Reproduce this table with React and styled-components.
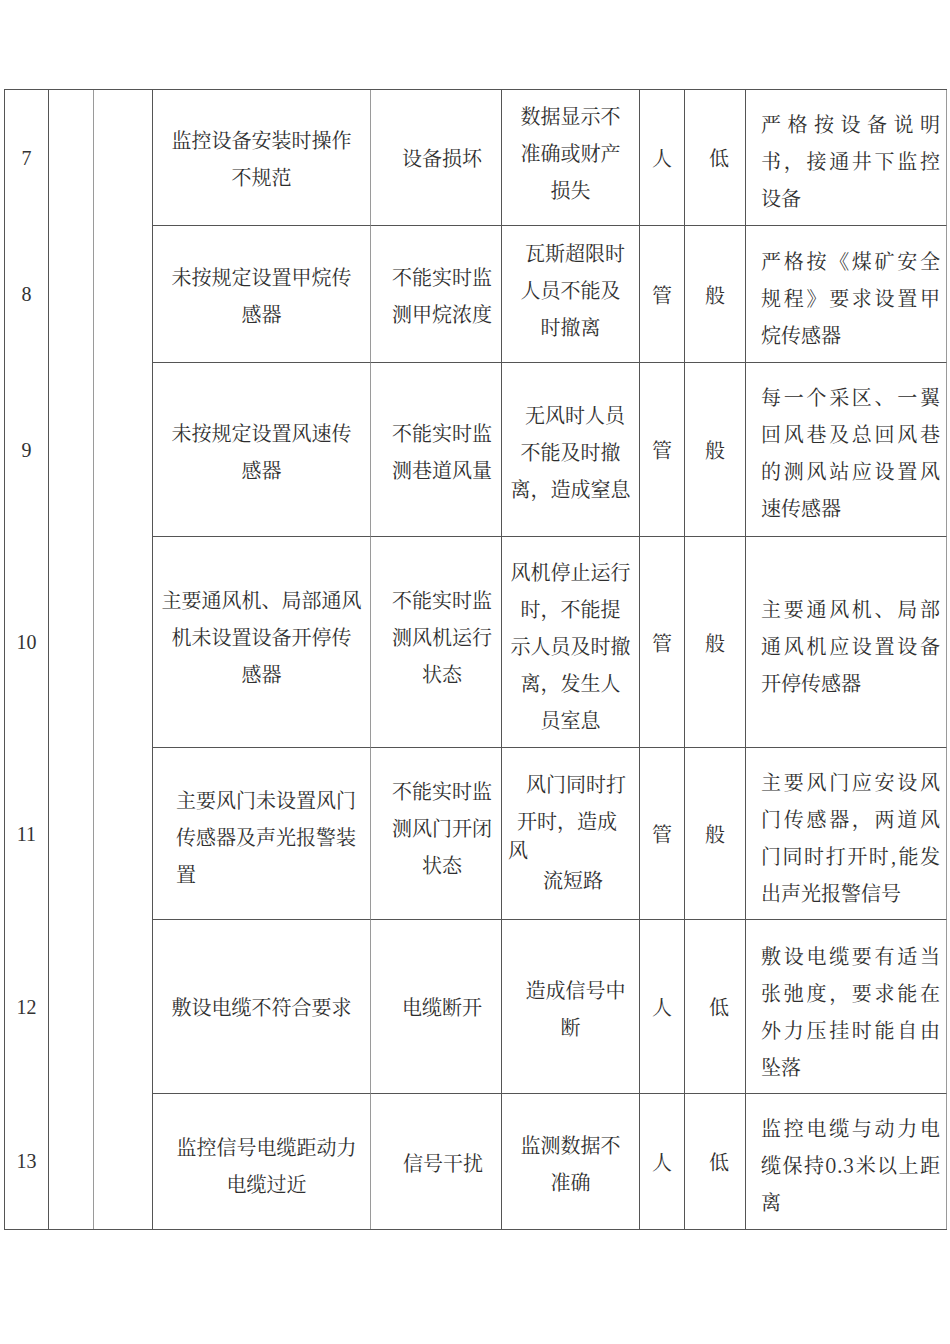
import React from 'react'
import styled, { createGlobalStyle } from 'styled-components'

const GlobalStyle = createGlobalStyle`
  html, body {
    margin: 0;
    padding: 0;
    background: #fff;
  }
  body {
    font-family: "Noto Serif CJK SC", "Noto Sans CJK SC", serif;
    color: #2e2e2e;
  }
`

const Page = styled.div`
  width: 950px;
  min-height: 1344px;
  padding: 89px 0 0 4px;
  box-sizing: border-box;
`

const Sheet = styled.div`
  display: grid;
  grid-template-columns: 44px 45px 59px 218px 131px 138px 45px 61px 201px;
  grid-template-rows: 136px 137px 174px 211px 172px 174px 135px;
  width: 943px;
  box-sizing: border-box;
  border: 1px solid #555;
  border-right: none;
`

const NumCell = styled.div`
  grid-column: 1;
  grid-row: ${p => p.$row};
  border-right: 1px solid #555;
  display: flex;
  align-items: center;
  justify-content: center;
  font-family: "Liberation Serif", "Times New Roman", serif;
  font-size: 20px;
  color: #333;
`

const BlankCol = styled.div`
  grid-column: ${p => p.$col};
  grid-row: 1 / -1;
  border-right: 1px solid ${p => (p.$light ? '#9a9a9a' : '#555')};
`

const Cell = styled.div`
  grid-column: ${p => p.$col};
  grid-row: ${p => p.$row};
  border-right: 1px solid ${p => (p.$light ? '#9a9a9a' : '#555')};
  border-bottom: ${p => (p.$last ? 'none' : '1px solid #555')};
  display: flex;
  flex-direction: column;
  justify-content: center;
  box-sizing: border-box;
  padding: ${p => p.$pad};
  text-align: ${p => p.$align || 'center'};
  font-size: 20px;
  line-height: 37px;
  overflow: hidden;
`

const Line = styled.div`
  white-space: ${p => (p.$spread ? 'normal' : 'nowrap')};
  padding-left: ${p => p.$indent || 0}px;
  line-height: ${p => (p.$lh ? `${p.$lh}px` : 'inherit')};
  text-align-last: ${p => (p.$spread ? 'justify' : 'auto')};
`

const rows = [
  {
    no: '7',
    item: { lines: ['监控设备安装时操作', '不规范'] },
    cause: { lines: ['设备损坏'] },
    result: { lines: ['数据显示不', '准确或财产', '损失'], dy: -5 },
    kind: '人',
    level: '低',
    measure: { lines: ['严格按设备说明', '书，接通井下监控', '设备'], dy: 3 },
  },
  {
    no: '8',
    item: { lines: ['未按规定设置甲烷传', '感器'], dy: 1 },
    cause: { lines: ['不能实时监', '测甲烷浓度'], dy: 1 },
    result: { lines: [{ t: '瓦斯超限时', i: 9 }, '人员不能及', '时撤离'], dy: -5 },
    kind: '管',
    level: '般',
    measure: { lines: ['严格按《煤矿安全', '规程》要求设置甲', '烷传感器'], dy: 3 },
  },
  {
    no: '9',
    item: { lines: ['未按规定设置风速传', '感器'], dy: 1 },
    cause: { lines: ['不能实时监', '测巷道风量'], dy: 1 },
    result: { lines: [{ t: '无风时人员', i: 9 }, '不能及时撤', '离，造成窒息'], dy: 2 },
    kind: '管',
    level: '般',
    measure: { lines: ['每一个采区、一翼', '回风巷及总回风巷', '的测风站应设置风', '速传感器'], dy: 2 },
  },
  {
    no: '10',
    item: { lines: ['主要通风机、局部通风', '机未设置设备开停传', '感器'], dy: -6 },
    cause: { lines: ['不能实时监', '测风机运行', '状态'], dy: -6 },
    result: { lines: ['风机停止运行', '时，不能提', '示人员及时撤', '离，发生人', '员室息'], dy: 3 },
    kind: '管',
    level: '般',
    measure: { lines: ['主要通风机、局部', '通风机应设置设备', '开停传感器'], dy: 3 },
  },
  {
    no: '11',
    item: { lines: ['主要风门未设置风门', '传感器及声光报警装', '置'], dy: 3, align: 'left', padLeft: 23 },
    cause: { lines: ['不能实时监', '测风门开闭', '状态'], dy: -6 },
    result: {
      lines: [{ t: '风门同时打', i: 18 }, { t: '开时，造成', i: 9 }, { t: '风', lh: 22 }, { t: '流短路', i: 35 }],
      dy: -2,
      align: 'left',
      padLeft: 6,
    },
    kind: '管',
    level: '般',
    measure: { lines: ['主要风门应安设风', '门传感器，两道风', '门同时打开时,能发', '出声光报警信号'], dy: 3 },
  },
  {
    no: '12',
    item: { lines: ['敷设电缆不符合要求'] },
    cause: { lines: ['电缆断开'] },
    result: { lines: [{ t: '造成信号中', i: 10 }, '断'], dy: 1 },
    kind: '人',
    level: '低',
    measure: { lines: ['敷设电缆要有适当', '张弛度，要求能在', '外力压挂时能自由', '坠落'], dy: 4 },
  },
  {
    no: '13',
    item: { lines: [{ t: '监控信号电缆距动力', i: 10 }, { t: '电缆过近', i: 10 }], dy: 3 },
    cause: { lines: [{ t: '信号干扰', i: 2 }], dy: 1 },
    result: { lines: ['监测数据不', '准确'], dy: 1 },
    kind: '人',
    level: '低',
    measure: { lines: ['监控电缆与动力电', '缆保持0.3米以上距', '离'], dy: 3 },
  },
]

const vpad = (dy = 0) => (dy >= 0 ? [dy * 2, 0] : [0, -dy * 2])

const TextCell = ({ col, row, last, light, data, padL = 4, padR = 4, spread }) => {
  const [pt, pb] = vpad(data.dy)
  const left = data.padLeft != null ? data.padLeft : padL
  return (
    <Cell
      $col={col}
      $row={row}
      $last={last}
      $light={light}
      $align={spread ? 'justify' : data.align}
      $pad={`${pt}px ${padR}px ${pb}px ${left}px`}
    >
      {data.lines.map((l, i) => {
        const o = typeof l === 'string' ? { t: l } : l
        const isLast = i === data.lines.length - 1
        return (
          <Line key={i} $indent={o.i} $lh={o.lh} $spread={spread && !isLast}>
            {o.t}
          </Line>
        )
      })}
    </Cell>
  )
}

const App = () => {
  return (
    <Page>
      <GlobalStyle />
      <Sheet>
        <BlankCol $col={2} $light />
        <BlankCol $col={3} />
        {rows.map((r, idx) => {
          const row = idx + 1
          const last = idx === rows.length - 1
          return (
            <React.Fragment key={r.no}>
              <NumCell $row={row}>{r.no}</NumCell>
              <TextCell col={4} row={row} last={last} light data={r.item} />
              <TextCell col={5} row={row} last={last} data={r.cause} padL={14} padR={2} />
              <TextCell col={6} row={row} last={last} data={r.result} padL={2} padR={2} />
              <TextCell col={7} row={row} last={last} data={{ lines: [r.kind] }} padL={2} padR={2} />
              <TextCell col={8} row={row} last={last} data={{ lines: [r.level] }} padL={r.level === '低' ? 10 : 2} padR={2} />
              <TextCell col={9} row={row} last={last} light data={r.measure} padL={15} padR={6} spread />
            </React.Fragment>
          )
        })}
      </Sheet>
    </Page>
  )
}

export default App
